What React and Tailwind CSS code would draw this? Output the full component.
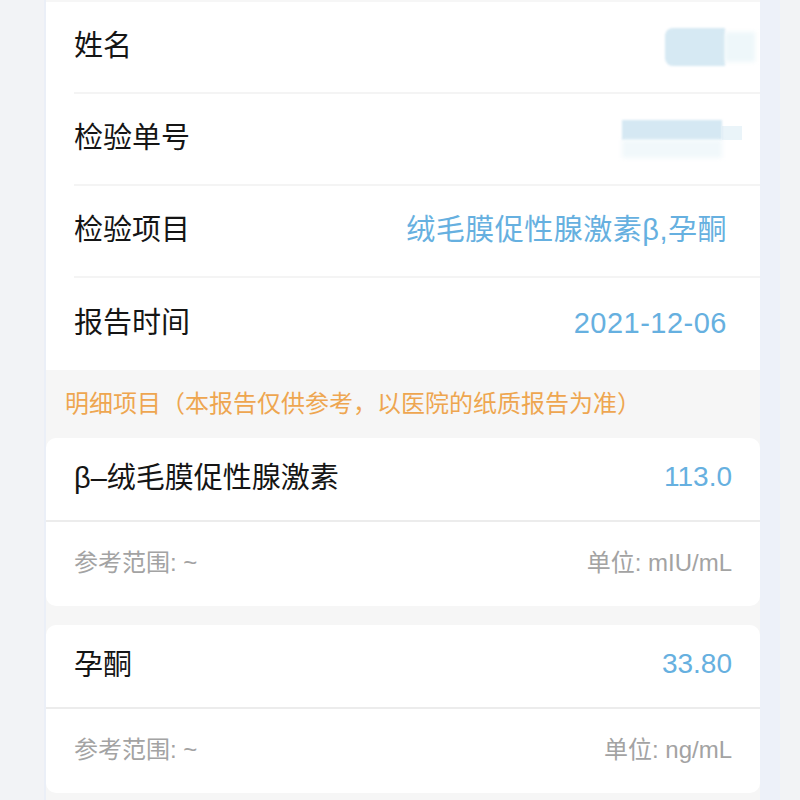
import React from 'react';

const font = { fontFamily: '"Liberation Sans", "Noto Sans CJK SC", sans-serif' };

const info = [
  { label: '姓名', value: null, blur: 'name' },
  { label: '检验单号', value: null, blur: 'no' },
  { label: '检验项目', value: '绒毛膜促性腺激素β,孕酮' },
  { label: '报告时间', value: '2021-12-06' },
];

const items = [
  { name: 'β–绒毛膜促性腺激素', value: '113.0', unit: 'mIU/mL' },
  { name: '孕酮', value: '33.80', unit: 'ng/mL' },
];

const Blur = ({ kind }) =>
  kind === 'name' ? (
    <div className="mr-[-28px] flex items-center">
      <div className="h-[38px] w-[60px] rounded-l-[8px] bg-[#d6e9f3] blur-[1px]" />
      <div className="h-[30px] w-[30px] bg-[#eef7fa] blur-[2px]" />
    </div>
  ) : (
    <div className="mr-[-15px] flex flex-col">
      <div className="flex">
        <div className="h-[20px] w-[100px] bg-[#d5e8f3] blur-[1px]" />
        <div className="mt-[6px] h-[14px] w-[20px] bg-[#eaf4f9]" />
      </div>
      <div className="h-[18px] w-[100px] bg-[#f1f8fb] blur-[2px]" />
    </div>
  );

export default function App() {
  return (
    <div className="flex h-[800px] w-[800px] overflow-hidden bg-[#f2f3f6]" style={font}>
      <div className="w-[44px] bg-[#f2f3f6]" />
      <div className="w-[2px] bg-[#ebeff7]" />
      <div className="flex w-[714px] flex-col bg-[#f6f6f6] pt-[2px]">
        <div className="bg-white">
          {info.map((row, i) => (
            <div key={row.label} className="pl-[28px]">
              <div
                className={`flex h-[92px] items-center justify-between pr-[33px] ${i < info.length - 1 ? 'border-b-2 border-[#f4f4f4]' : ''}`}
              >
                <span className="text-[29px] text-[#151515]">{row.label}</span>
                {row.value ? (
                  <span className="text-[29px] tracking-[0.5px] text-[#66b0e0]">{row.value}</span>
                ) : (
                  <Blur kind={row.blur} />
                )}
              </div>
            </div>
          ))}
        </div>

        <div className="flex h-[68px] items-center pl-[19px] text-[24px] text-[#eea650]">
          明细项目（本报告仅供参考，以医院的纸质报告为准）
        </div>

        <div className="flex flex-col gap-[19px]">
          {items.map((it) => (
            <div key={it.name} className="rounded-[10px] bg-white">
              <div className="flex h-[84px] items-center justify-between border-b-2 border-[#ececec] px-[28px]">
                <span className="text-[29px] text-[#151515]">{it.name}</span>
                <span className="mb-[4px] text-[28px] text-[#66b0e0]">{it.value}</span>
              </div>
              <div className="flex h-[84px] items-center justify-between px-[28px] pb-[2px] text-[24px] text-[#a3a3a3]">
                <span>参考范围: ~</span>
                <span>单位: {it.unit}</span>
              </div>
            </div>
          ))}
        </div>
      </div>
      <div className="w-[20px] bg-[#edf1f9]" />
      <div className="w-[20px] bg-[#f2f3f5]" />
    </div>
  );
}
